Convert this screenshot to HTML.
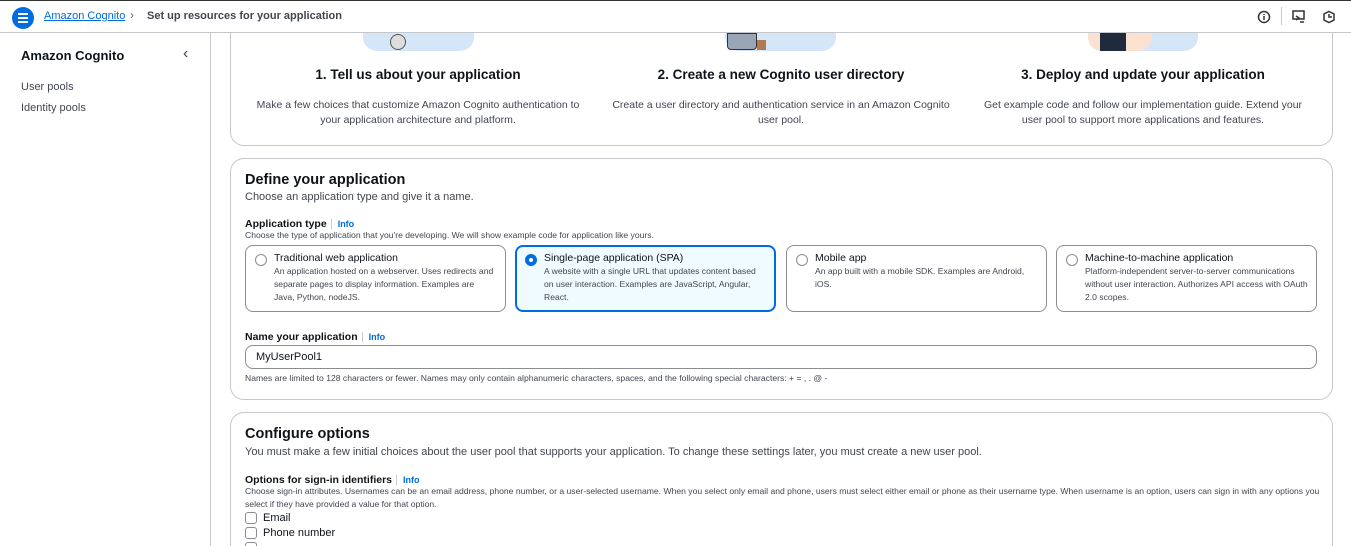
<!DOCTYPE html>
<html><head><style>
*{box-sizing:border-box;margin:0;padding:0}
html,body{width:1351px;height:546px;overflow:hidden}
body{font-family:"Liberation Sans",Arial,sans-serif;color:#0f141a;background:#fff;position:relative}
.top{position:absolute;left:0;top:0;width:1351px;height:33px;border-top:1px solid #333;border-bottom:1px solid #c6c6cd;background:#fff;z-index:10}
.menu{position:absolute;left:12px;top:6px;width:22px;height:22px;border-radius:50%;background:#006ce0}
.menu i{position:absolute;left:6px;width:10px;height:2px;background:#fff}
.side{position:absolute;left:0;top:33px;width:211px;height:513px;border-right:1px solid #c6c6cd}
.box{position:absolute;left:230px;width:1103px;border:1px solid #c6c6cd;border-radius:14px;background:#fff}
.abs{position:absolute}
.col{position:absolute;width:360px;text-align:center}
.col h3{font-size:13.5px;font-weight:bold;margin-bottom:16px}
.col p{font-size:10.5px;color:#424650;line-height:15px}
.tile{position:absolute;top:245px;width:261px;height:67px;border:1px solid #8c8c94;border-radius:8px;padding:6px 8px 0 28px;font-size:8.6px;color:#424650;line-height:13px}
.tile b{display:block;font-weight:normal;color:#0f141a;font-size:10.5px;margin-bottom:0px}
.tile .r{position:absolute;left:9px;top:8px;width:12px;height:12px;border:1px solid #8c8c94;border-radius:50%;background:#fff}
.lab{font-size:10.5px;font-weight:bold}
.info{color:#006ce0;font-size:9px;font-weight:bold;border-left:1px solid #c6c6cd;padding-left:6px;margin-left:4px}
.small{font-size:8.6px;color:#424650}
.cb{position:absolute;left:245px;width:12px;height:12px;border:1px solid #8c8c94;border-radius:3px}
</style></head><body>
<div class="top">
 <div class="menu"><i style="top:6px"></i><i style="top:10px"></i><i style="top:14px"></i></div>
 <span class="abs" style="left:44px;top:9px;font-size:11px;color:#006ce0;text-decoration:underline">Amazon Cognito</span>
 <span class="abs" style="left:130px;top:7px;font-size:12px;color:#656871">&#x203A;</span>
 <span class="abs" style="left:147px;top:9px;font-size:11px;font-weight:bold;color:#424650">Set up resources for your application</span>
 <svg class="abs" style="left:1257px;top:9px" width="14" height="14" viewBox="0 0 14 14"><circle cx="7" cy="7" r="5.5" fill="none" stroke="#333" stroke-width="1.5"/><path d="M7 6v4M7 4v1" stroke="#333" stroke-width="1.5"/></svg>
 <div class="abs" style="left:1281px;top:6px;width:1px;height:18px;background:#c6c6cd"></div>
 <svg class="abs" style="left:1292px;top:9px" width="14" height="14" viewBox="0 0 14 14"><rect x="1" y="1" width="11" height="8" fill="none" stroke="#333" stroke-width="1.5"/><path d="M4 6l3 2-3 2M8 12h4" stroke="#333" stroke-width="1.5" fill="none"/></svg>
 <svg class="abs" style="left:1322px;top:9px" width="14" height="14" viewBox="0 0 14 14"><path d="M7 1.5l5 2.5v6l-5 2.5-5-2.5v-6z" fill="none" stroke="#333" stroke-width="1.5"/><path d="M7 4v3h3" stroke="#333" stroke-width="1.5" fill="none"/></svg>
</div>
<div class="side">
 <div class="abs" style="left:21px;top:15px;font-size:13px;font-weight:bold">Amazon Cognito</div>
 <div class="abs" style="left:183px;top:12px;font-size:16px;color:#424650">&#x2039;</div>
 <div class="abs" style="left:21px;top:48px;font-size:11px;color:#424650">User pools</div>
 <div class="abs" style="left:21px;top:69px;font-size:11px;color:#424650">Identity pools</div>
</div>
<div class="box" style="top:10px;height:136px"></div>
<div class="abs" style="left:363px;top:33px;width:111px;height:18px;background:#d4e6f8;border-radius:0 0 14px 14px"></div>
<div class="abs" style="left:390px;top:34px;width:16px;height:16px;border:1.5px solid #555;border-radius:50%;background:#ddd"></div>
<div class="abs" style="left:725px;top:33px;width:111px;height:18px;background:#d4e6f8;border-radius:0 0 14px 14px"></div>
<div class="abs" style="left:727px;top:33px;width:30px;height:17px;background:#9aa6b8;border:1px solid #333;border-radius:0 0 4px 4px"></div>
<div class="abs" style="left:757px;top:40px;width:9px;height:10px;background:#b37a50"></div>
<div class="abs" style="left:1088px;top:33px;width:110px;height:18px;background:#d4e6f8;border-radius:0 0 14px 14px"></div>
<div class="abs" style="left:1088px;top:33px;width:64px;height:18px;background:#fbe2d0;border-radius:0 0 14px 14px"></div>
<div class="abs" style="left:1100px;top:33px;width:26px;height:18px;background:#1f2a3c"></div>
<div class="col" style="left:238px;top:67px"><h3>1. Tell us about your application</h3><p>Make a few choices that customize Amazon Cognito authentication to<br>your application architecture and platform.</p></div>
<div class="col" style="left:601px;top:67px"><h3>2. Create a new Cognito user directory</h3><p>Create a user directory and authentication service in an Amazon Cognito<br>user pool.</p></div>
<div class="col" style="left:963px;top:67px"><h3>3. Deploy and update your application</h3><p>Get example code and follow our implementation guide. Extend your<br>user pool to support more applications and features.</p></div>

<div class="box" style="top:158px;height:242px"></div>
<div class="abs" style="left:245px;top:172px;font-size:14.5px;font-weight:bold">Define your application</div>
<div class="abs" style="left:245px;top:191px;font-size:11px;color:#424650">Choose an application type and give it a name.</div>
<div class="abs" style="left:245px;top:214px"><span class="lab">Application type</span><span class="info">Info</span></div>
<div class="abs small" style="left:245px;top:230px">Choose the type of application that you're developing. We will show example code for application like yours.</div>
<div class="tile" style="left:245px"><span class="r"></span><b>Traditional web application</b>An application hosted on a webserver. Uses redirects and separate pages to display information. Examples are Java, Python, nodeJS.</div>
<div class="tile" style="left:515px;border:2px solid #006ce0;background:#f0fbff;padding-left:27px;padding-top:5px"><span class="r" style="border:4px solid #006ce0;left:8px;top:7px"></span><b>Single-page application (SPA)</b>A website with a single URL that updates content based on user interaction. Examples are JavaScript, Angular, React.</div>
<div class="tile" style="left:786px"><span class="r"></span><b>Mobile app</b>An app built with a mobile SDK. Examples are Android, iOS.</div>
<div class="tile" style="left:1056px"><span class="r"></span><b>Machine-to-machine application</b>Platform-independent server-to-server communications without user interaction. Authorizes API access with OAuth 2.0 scopes.</div>
<div class="abs" style="left:245px;top:327px"><span class="lab">Name your application</span><span class="info">Info</span></div>
<div class="abs" style="left:245px;top:345px;width:1072px;height:24px;border:1px solid #8c8c94;border-radius:8px;padding:5px 10px;font-size:11px">MyUserPool1</div>
<div class="abs small" style="left:245px;top:373px">Names are limited to 128 characters or fewer. Names may only contain alphanumeric characters, spaces, and the following special characters: + = , . @ -</div>

<div class="box" style="top:412px;height:160px"></div>
<div class="abs" style="left:245px;top:426px;font-size:14.5px;font-weight:bold">Configure options</div>
<div class="abs" style="left:245px;top:446px;font-size:11px;color:#424650">You must make a few initial choices about the user pool that supports your application. To change these settings later, you must create a new user pool.</div>
<div class="abs" style="left:245px;top:470px"><span class="lab">Options for sign-in identifiers</span><span class="info">Info</span></div>
<div class="abs small" style="left:245px;top:485px;width:1075px;line-height:12.5px">Choose sign-in attributes. Usernames can be an email address, phone number, or a user-selected username. When you select only email and phone, users must select either email or phone as their username type. When username is an option, users can sign in with any options you select if they have provided a value for that option.</div>
<div class="cb" style="top:512px"></div><div class="abs" style="left:263px;top:512px;font-size:11px">Email</div>
<div class="cb" style="top:527px"></div><div class="abs" style="left:263px;top:527px;font-size:11px">Phone number</div>
<div class="cb" style="top:542px"></div>
</body></html>
